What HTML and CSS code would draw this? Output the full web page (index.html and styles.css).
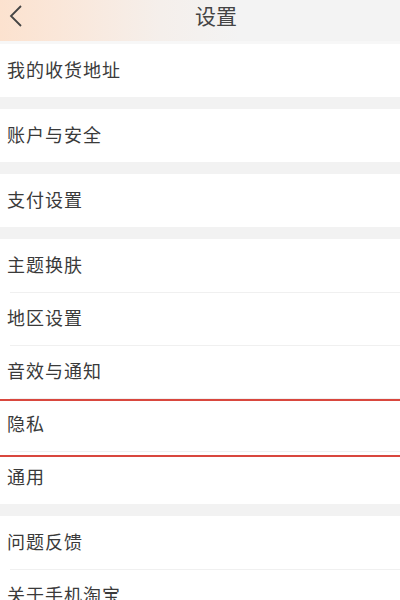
FILE: index.html
```html
<!DOCTYPE html>
<html lang="zh">
<head>
<meta charset="utf-8">
<link rel="stylesheet" href="styles.css">
</head>
<body>
<div class="page">
  <header class="nav">
    <span class="back">
      <svg width="14" height="24" viewBox="0 0 14 24"><path d="M12 2 L2 12 L12 22" fill="none" stroke="#444" stroke-width="1.8"/></svg>
    </span>
    <h1 class="title">设置</h1>
  </header>
  <div class="divider"></div>
  <section class="group">
    <div class="row">我的收货地址</div>
  </section>
  <section class="group">
    <div class="row">账户与安全</div>
  </section>
  <section class="group">
    <div class="row">支付设置</div>
  </section>
  <section class="group">
    <div class="row">主题换肤</div>
    <div class="row">地区设置</div>
    <div class="row">音效与通知</div>
    <div class="row row-hl">隐私</div>
    <div class="row">通用</div>
  </section>
  <section class="group">
    <div class="row">问题反馈</div>
    <div class="row">关于手机淘宝</div>
  </section>
</div>
</body>
</html>
```
FILE: styles.css
```css
html, body {
  margin: 0;
  padding: 0;
  background: #f2f2f2;
}
body {
  font-family: "Noto Sans CJK SC", "Noto Sans", sans-serif;
  color: #333;
  width: 400px;
  height: 600px;
  overflow: hidden;
}
.nav {
  height: 41px;
  display: flex;
  align-items: center;
  position: relative;
  background: linear-gradient(90deg, #fce2cf 0%, #f9e9de 22%, #f5efeb 40%, #f3f3f3 60%, #f3f3f3 100%);
}
.back {
  display: flex;
  padding-left: 9px;
  margin-top: -10px;
}
.title {
  position: absolute;
  left: 0;
  right: 0;
  top: 0;
  margin: 0;
  text-align: center;
  font-size: 21px;
  font-weight: normal;
  line-height: 30px;
  padding-left: 32px;
  color: #444;
}
.divider {
  height: 3px;
  background: #f7f7f7;
}
.group {
  background: #fff;
  margin-bottom: 12px;
}
.row {
  height: 53px;
  box-sizing: border-box;
  display: flex;
  align-items: center;
  padding-left: 7px;
  padding-bottom: 3px;
  font-size: 18px;
  letter-spacing: 1px;
  color: #3a3a3a;
  position: relative;
}
.row + .row::before {
  content: "";
  position: absolute;
  left: 10px;
  right: 0;
  top: 0;
  height: 1px;
  background: #f0f0f0;
}
.row-hl::after {
  content: "";
  position: absolute;
  left: 0;
  right: 0;
  top: 1px;
  height: 54px;
  border-top: 2px solid #d9473e;
  border-bottom: 2px solid #d9473e;
  z-index: 1;
}
```
